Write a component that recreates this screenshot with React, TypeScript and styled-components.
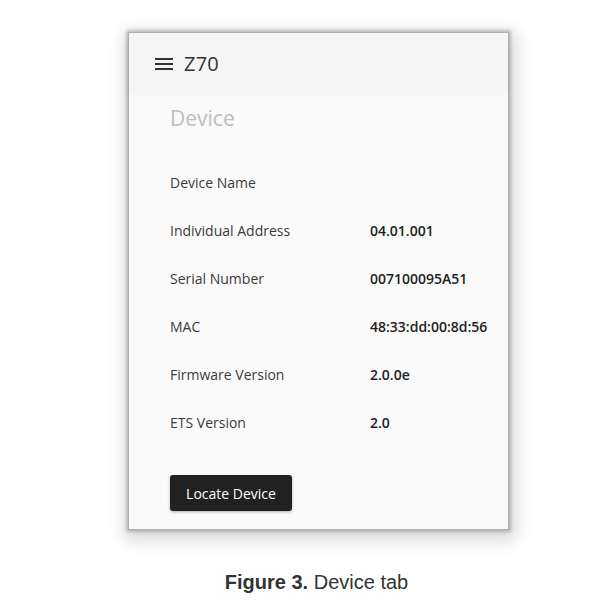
import styled, { createGlobalStyle } from "styled-components";

const GlobalStyle = createGlobalStyle`
  html, body {
    margin: 0;
    padding: 0;
    background: #ffffff;
  }
`;

const rows = [
  { label: "Device Name", value: "" },
  { label: "Individual Address", value: "04.01.001" },
  { label: "Serial Number", value: "007100095A51" },
  { label: "MAC", value: "48:33:dd:00:8d:56" },
  { label: "Firmware Version", value: "2.0.0e" },
  { label: "ETS Version", value: "2.0" },
];

export default function App() {
  return (
    <>
      <GlobalStyle />
      <Page>
        <Card>
          <Header>
            <MenuIcon viewBox="0 0 18 12">
              <rect x="0" y="0" width="18" height="2" />
              <rect x="0" y="5" width="18" height="2" />
              <rect x="0" y="10" width="18" height="2" />
            </MenuIcon>
            <Title>Z70</Title>
          </Header>

          <Body>
            <Heading>Device</Heading>
            <InfoList>
              {rows.map((r) => (
                <InfoRow key={r.label}>
                  <Label>{r.label}</Label>
                  <Value>{r.value}</Value>
                </InfoRow>
              ))}
            </InfoList>
            <LocateButton type="button">Locate Device</LocateButton>
          </Body>
        </Card>

        <Caption>
          <b>Figure 3.</b> Device tab
        </Caption>
      </Page>
    </>
  );
}

const Page = styled.div`
  width: 601px;
  height: 608px;
  display: flex;
  flex-direction: column;
  align-items: flex-start;
  padding: 33px 0 0 129px;
  box-sizing: border-box;
`;

const Card = styled.div`
  width: 379px;
  height: 496px;
  background: #fafafa;
  box-shadow: 0 0 0 1px #b0b0b0, 0 0 3px 3px rgba(0, 0, 0, 0.2),
    2px 5px 16px 6px rgba(0, 0, 0, 0.16);
  font-family: "Open Sans", "Noto Sans", sans-serif;
  display: flex;
  flex-direction: column;
`;

const Header = styled.div`
  height: 60px;
  background: #f5f5f5;
  display: flex;
  align-items: center;
  padding: 0 0 0 26px;
  gap: 11px;
  box-shadow: 0 2px 6px rgba(0, 0, 0, 0.03);
`;

const MenuIcon = styled.svg`
  width: 18px;
  height: 12px;
  fill: #333;
  margin-top: 1px;
`;

const Title = styled.span`
  font-size: 20px;
  color: #333;
  letter-spacing: 0.2px;
`;

const Body = styled.div`
  padding: 11px 0 0 41px;
  display: flex;
  flex-direction: column;
  align-items: flex-start;
`;

const Heading = styled.h2`
  margin: 0;
  font-size: 21px;
  font-weight: 400;
  color: #bdbdbd;
  line-height: 28px;
`;

const InfoList = styled.div`
  margin-top: 41px;
  display: flex;
  flex-direction: column;
`;

const InfoRow = styled.div`
  height: 48px;
  display: grid;
  grid-template-columns: 200px 1fr;
  align-items: start;
`;

const Label = styled.span`
  font-size: 14px;
  line-height: 20px;
  color: #3a3a3a;
`;

const Value = styled.span`
  font-size: 14px;
  line-height: 20px;
  font-weight: 600;
  color: #222;
`;

const LocateButton = styled.button`
  margin-top: 14px;
  width: 122px;
  height: 36px;
  background: #212121;
  color: #fff;
  border: none;
  border-radius: 3px;
  font-family: "Open Sans", "Noto Sans", sans-serif;
  font-size: 14px;
  box-shadow: 0 1px 3px rgba(0, 0, 0, 0.3);
  padding: 0;
`;

const Caption = styled.div`
  margin-top: 42px;
  align-self: center;
  margin-left: -129px;
  padding-left: 32px;
  font-family: "Liberation Sans", Arial, sans-serif;
  font-size: 20px;
  color: #333;
`;
